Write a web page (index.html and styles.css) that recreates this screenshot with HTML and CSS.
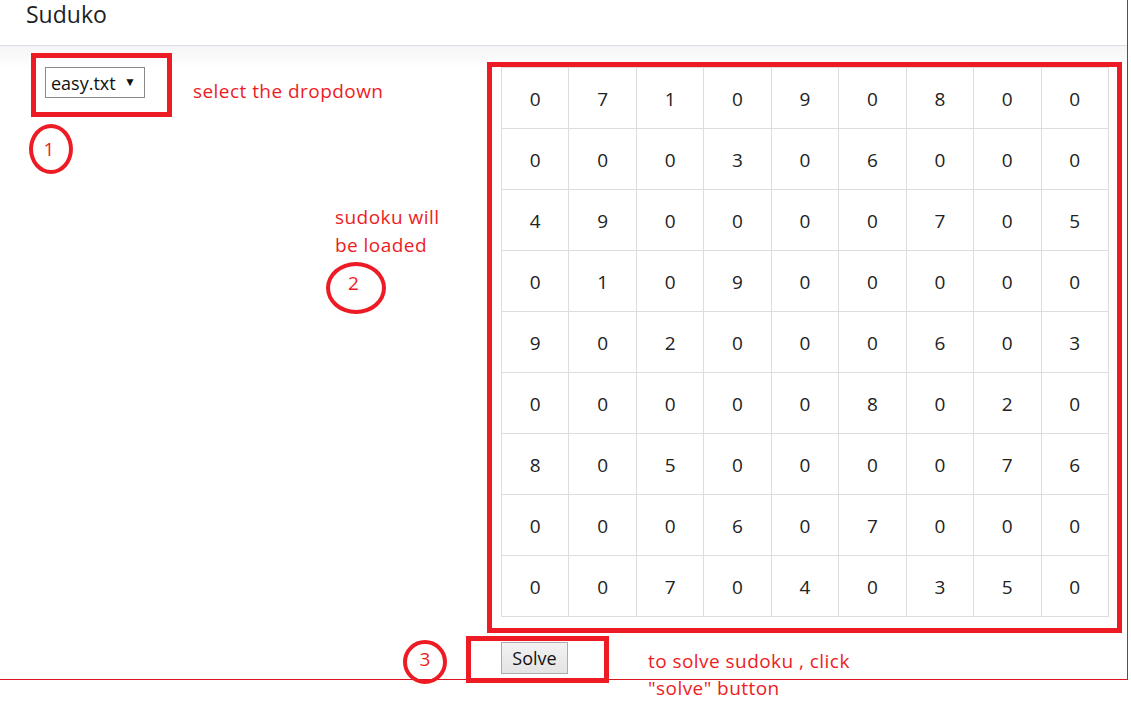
FILE: index.html
```html
<!DOCTYPE html>
<html>
<head>
<meta charset="utf-8">
<title>Suduko</title>
<link rel="stylesheet" href="styles.css">
</head>
<body>
<div class="page">
  <header class="topbar"><h1 class="title">Suduko</h1></header>
  <main class="content">
    <div class="side">
      <div class="select"><span class="select-text">easy.txt</span><span class="select-arrow">▼</span></div>
    </div>
    <div class="board">
      <table class="grid">
        <tr><td>0</td><td>7</td><td>1</td><td>0</td><td>9</td><td>0</td><td>8</td><td>0</td><td>0</td></tr>
        <tr><td>0</td><td>0</td><td>0</td><td>3</td><td>0</td><td>6</td><td>0</td><td>0</td><td>0</td></tr>
        <tr><td>4</td><td>9</td><td>0</td><td>0</td><td>0</td><td>0</td><td>7</td><td>0</td><td>5</td></tr>
        <tr><td>0</td><td>1</td><td>0</td><td>9</td><td>0</td><td>0</td><td>0</td><td>0</td><td>0</td></tr>
        <tr><td>9</td><td>0</td><td>2</td><td>0</td><td>0</td><td>0</td><td>6</td><td>0</td><td>3</td></tr>
        <tr><td>0</td><td>0</td><td>0</td><td>0</td><td>0</td><td>8</td><td>0</td><td>2</td><td>0</td></tr>
        <tr><td>8</td><td>0</td><td>5</td><td>0</td><td>0</td><td>0</td><td>0</td><td>7</td><td>6</td></tr>
        <tr><td>0</td><td>0</td><td>0</td><td>6</td><td>0</td><td>7</td><td>0</td><td>0</td><td>0</td></tr>
        <tr><td>0</td><td>0</td><td>7</td><td>0</td><td>4</td><td>0</td><td>3</td><td>5</td><td>0</td></tr>
      </table>
      <button class="solve" type="button">Solve</button>
    </div>
  </main>

  <div class="mark box-select"></div>
  <div class="mark box-grid"></div>
  <div class="mark box-solve"></div>
  <div class="ring ring-1"><span>1</span></div>
  <div class="ring ring-2"><span>2</span></div>
  <div class="ring ring-3"><span>3</span></div>
  <p class="note note-1">select the dropdown</p>
  <p class="note note-2">sudoku will<br>be loaded</p>
  <p class="note note-3">to solve sudoku , click<br>"solve" button</p>
</div>
</body>
</html>
```

FILE: styles.css
```css
html, body {
  margin: 0;
  padding: 0;
  background: #ffffff;
}

body {
  min-height: 707px;
  font-family: "Open Sans", "Noto Sans", sans-serif;
  color: #222;
}

.page {
  position: relative;
  width: 1127px;
  height: 679px;
  border-right: 1px solid #d9161e;
  border-bottom: 1px solid #d9161e;
  overflow: visible;
}

.topbar {
  height: 45px;
  border-bottom: 1px solid #dcdce4;
  background: #fff;
}

.title {
  margin: 0;
  padding-left: 26px;
  font-weight: 400;
  font-size: 23px;
  line-height: 28px;
  color: #1e1e1e;
}

.content {
  display: flex;
  background: linear-gradient(#f5f5f7, #ffffff 22px);
  padding-top: 21px;
}

.side {
  width: 456px;
  padding-left: 45px;
}

.select {
  box-sizing: border-box;
  width: 100px;
  height: 31px;
  border: 1px solid #8a8a8a;
  background: #fff;
  display: flex;
  align-items: center;
  padding-left: 5px;
  font-size: 18px;
  color: #111;
}

.select-text {
  flex: 1;
  line-height: 20px;
}

.select-arrow {
  font-size: 12px;
  margin-right: 8px;
  margin-bottom: 3px;
  color: #111;
}

.board {
  display: flex;
  flex-direction: column;
  align-items: flex-start;
}

.grid {
  border-collapse: collapse;
  width: 608px;
  table-layout: fixed;
}

.grid td {
  border: 1px solid #dddddd;
  height: 61px;
  padding: 0;
  text-align: center;
  font-size: 19px;
  color: #222;
  line-height: 20px;
  padding-top: 2px;
  box-sizing: border-box;
}

.solve {
  margin-top: 25px;
  width: 67px;
  height: 32px;
  border: 1px solid #acacac;
  border-radius: 0;
  background: linear-gradient(#f2f2f2, #e4e4e4);
  font-family: "Open Sans", "Noto Sans", sans-serif;
  font-size: 18px;
  color: #111;
  padding: 0;
  line-height: 20px;
}

/* annotation overlays */
.mark {
  position: absolute;
  box-sizing: border-box;
  border: 5px solid #ed1c24;
}

.box-select { left: 31px; top: 53px; width: 141px; height: 64px; }
.box-grid { left: 487px; top: 62px; width: 635px; height: 571px; }
.box-solve { left: 466px; top: 636px; width: 143px; height: 47px; }

.ring {
  position: absolute;
  box-sizing: border-box;
  border: 4px solid #ed1c24;
  border-radius: 50%;
  display: flex;
  justify-content: center;
  align-items: center;
  color: #ed1c24;
  font-size: 19px;
  line-height: 19px;
}

.ring-1 { left: 29px; top: 124px; width: 44px; height: 50px; }
.ring-1 span { margin-right: 4px; }
.ring-2 { left: 326px; top: 262px; width: 60px; height: 52px; }
.ring-2 span { margin-right: 5px; margin-bottom: 10px; }
.ring-3 { left: 403px; top: 640px; width: 44px; height: 44px; }
.ring-3 span { margin-bottom: 5px; }

.note {
  position: absolute;
  margin: 0;
  color: #ed1c24;
  font-size: 19px;
  letter-spacing: 0.45px;
  line-height: 28px;
  white-space: nowrap;
}

.note-1 { left: 193px; top: 77px; }
.note-2 { left: 335px; top: 203px; }
.note-3 { left: 648px; top: 648px; line-height: 27px; }
```
